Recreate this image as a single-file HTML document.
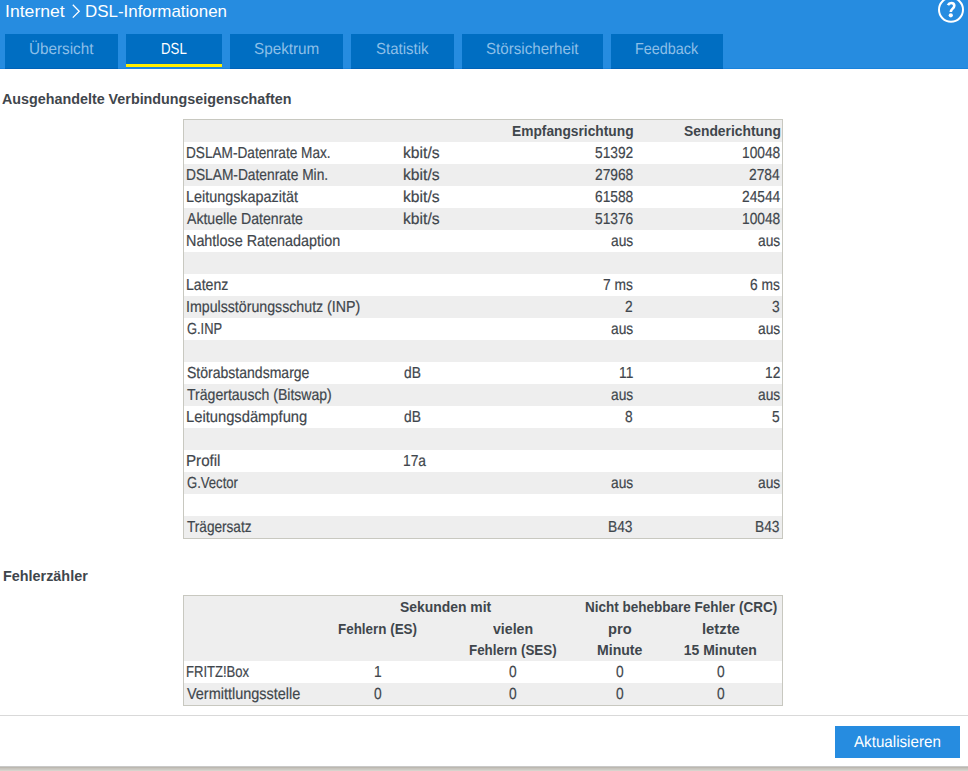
<!DOCTYPE html>
<html><head><meta charset="utf-8"><style>
html,body{margin:0;padding:0;background:#fff;width:968px;height:771px;overflow:hidden;position:relative}
body{font-family:"Liberation Sans",sans-serif;color:#3f464c}
.t{position:absolute;white-space:nowrap;line-height:22px;transform-origin:0 0}
.b{position:absolute}
</style></head><body>
<div class="b" style="left:0px;top:0px;width:968px;height:69px;background:#268ce0;"></div>
<div class="b" style="left:5px;top:34px;width:113px;height:35px;background:#006ec2;"></div>
<div class="b" style="left:126px;top:34px;width:96px;height:35px;background:#006ec2;"></div>
<div class="b" style="left:230px;top:34px;width:113px;height:35px;background:#006ec2;"></div>
<div class="b" style="left:351px;top:34px;width:103px;height:35px;background:#006ec2;"></div>
<div class="b" style="left:462px;top:34px;width:141px;height:35px;background:#006ec2;"></div>
<div class="b" style="left:611px;top:34px;width:112px;height:35px;background:#006ec2;"></div>
<div class="b" style="left:126px;top:64px;width:96px;height:3px;background:#ffee00;"></div>
<div class="b" style="left:183px;top:119px;width:600px;height:420px;background:#c8c8c0;"></div>
<div class="b" style="left:184px;top:120px;width:598px;height:418px;background:#ffffff;"></div>
<div class="b" style="left:184px;top:120px;width:598px;height:22px;background:#eeeeee;"></div>
<div class="b" style="left:184px;top:164px;width:598px;height:22px;background:#eeeeee;"></div>
<div class="b" style="left:184px;top:208px;width:598px;height:22px;background:#eeeeee;"></div>
<div class="b" style="left:184px;top:252px;width:598px;height:22px;background:#eeeeee;"></div>
<div class="b" style="left:184px;top:296px;width:598px;height:22px;background:#eeeeee;"></div>
<div class="b" style="left:184px;top:340px;width:598px;height:22px;background:#eeeeee;"></div>
<div class="b" style="left:184px;top:384px;width:598px;height:22px;background:#eeeeee;"></div>
<div class="b" style="left:184px;top:428px;width:598px;height:22px;background:#eeeeee;"></div>
<div class="b" style="left:184px;top:472px;width:598px;height:22px;background:#eeeeee;"></div>
<div class="b" style="left:184px;top:516px;width:598px;height:22px;background:#eeeeee;"></div>
<div class="b" style="left:183px;top:595px;width:600px;height:111px;background:#c8c8c0;"></div>
<div class="b" style="left:184px;top:596px;width:598px;height:109px;background:#ffffff;"></div>
<div class="b" style="left:184px;top:596px;width:598px;height:65px;background:#eeeeee;"></div>
<div class="b" style="left:184px;top:683px;width:598px;height:22px;background:#eeeeee;"></div>
<div class="b" style="left:0px;top:715px;width:968px;height:1px;background:#d9d9d9;"></div>
<div class="b" style="left:835px;top:726px;width:125px;height:32px;background:#268ce0;"></div>
<div class="b" style="left:0px;top:766px;width:968px;height:1px;background:#c9c9c8;"></div>
<div class="b" style="left:0px;top:767px;width:968px;height:1px;background:#bcb8b0;"></div>
<div class="b" style="left:0px;top:768px;width:968px;height:1px;background:#c7c4bd;"></div>
<div class="b" style="left:0px;top:769px;width:968px;height:1px;background:#cdcbc5;"></div>
<div class="b" style="left:0px;top:770px;width:968px;height:1px;background:#d7d4cd;"></div>
<div class="b" style="left:0px;top:68px;width:968px;height:1px;background:#1982dc;"></div>
<div class="b" style="left:5px;top:68px;width:113px;height:1px;background:#0062b8;"></div>
<div class="b" style="left:126px;top:67px;width:96px;height:2px;background:#1a84e2;"></div>
<div class="b" style="left:230px;top:68px;width:113px;height:1px;background:#0062b8;"></div>
<div class="b" style="left:351px;top:68px;width:103px;height:1px;background:#0062b8;"></div>
<div class="b" style="left:462px;top:68px;width:141px;height:1px;background:#0062b8;"></div>
<div class="b" style="left:611px;top:68px;width:112px;height:1px;background:#0062b8;"></div>
<svg class="b" style="left:0;top:0" width="968" height="69">
<polyline points="72.8,4.8 79.2,11.2 72.8,17.6" fill="none" stroke="#fff" stroke-width="1.3"/>
<circle cx="951" cy="9.7" r="12" fill="none" stroke="#fff" stroke-width="2"/>
<path d="M947.9,5.2 C948.7,3.7 949.9,3.0 951.3,3.0 C953.2,3.0 954.3,4.2 954.3,5.8 C954.3,7.4 953.1,8.3 952.2,9.1 C951.3,9.9 950.8,10.6 950.8,12.0" fill="none" stroke="#fff" stroke-width="2.6"/>
<circle cx="950.8" cy="15.35" r="2.1" fill="#fff"/>
</svg>
<div class="t" style="left:4.96px;top:1px;font-size:17px;transform:scaleX(1.0364);color:#fff;">Internet</div>
<div class="t" style="left:84.51px;top:1px;font-size:17px;transform:scaleX(0.9948);color:#fff;">DSL-Informationen</div>
<div class="t" style="left:28.55px;top:39px;font-size:16px;text-rendering:geometricPrecision;transform:scaleX(0.9533);color:#8cbfe8;">Übersicht</div>
<div class="t" style="left:160.67px;top:39px;font-size:16px;text-rendering:geometricPrecision;transform:scaleX(0.8271);color:#fff;">DSL</div>
<div class="t" style="left:254.00px;top:39px;font-size:16px;text-rendering:geometricPrecision;transform:scaleX(0.9539);color:#8cbfe8;">Spektrum</div>
<div class="t" style="left:375.80px;top:39px;font-size:16px;text-rendering:geometricPrecision;transform:scaleX(0.9366);color:#8cbfe8;">Statistik</div>
<div class="t" style="left:486.00px;top:39px;font-size:16px;text-rendering:geometricPrecision;transform:scaleX(0.9454);color:#8cbfe8;">Störsicherheit</div>
<div class="t" style="left:634.50px;top:39px;font-size:16px;text-rendering:geometricPrecision;transform:scaleX(0.8994);color:#8cbfe8;">Feedback</div>
<div class="t" style="left:2.20px;top:88px;font-size:14px;transform:scaleX(1.0226);font-weight:bold;">Ausgehandelte Verbindungseigenschaften</div>
<div class="t" style="left:512.00px;top:120px;font-size:14px;transform:scaleX(0.9828);font-weight:bold;">Empfangsrichtung</div>
<div class="t" style="left:683.60px;top:120px;font-size:14px;transform:scaleX(0.9892);font-weight:bold;">Senderichtung</div>
<div class="t" style="left:186.15px;top:143px;font-size:16px;text-rendering:geometricPrecision;-webkit-text-stroke:0.2px;transform:scaleX(0.8513);">DSLAM-Datenrate Max.</div>
<div class="t" style="left:403.02px;top:143px;font-size:16px;text-rendering:geometricPrecision;-webkit-text-stroke:0.2px;transform:scaleX(0.9795);">kbit/s</div>
<div class="t" style="left:594.65px;top:143px;font-size:16px;text-rendering:geometricPrecision;-webkit-text-stroke:0.2px;transform:scaleX(0.8600);">51392</div>
<div class="t" style="left:741.65px;top:143px;font-size:16px;text-rendering:geometricPrecision;-webkit-text-stroke:0.2px;transform:scaleX(0.8600);">10048</div>
<div class="t" style="left:186.14px;top:165px;font-size:16px;text-rendering:geometricPrecision;-webkit-text-stroke:0.2px;transform:scaleX(0.8592);">DSLAM-Datenrate Min.</div>
<div class="t" style="left:403.02px;top:165px;font-size:16px;text-rendering:geometricPrecision;-webkit-text-stroke:0.2px;transform:scaleX(0.9795);">kbit/s</div>
<div class="t" style="left:594.65px;top:165px;font-size:16px;text-rendering:geometricPrecision;-webkit-text-stroke:0.2px;transform:scaleX(0.8600);">27968</div>
<div class="t" style="left:749.30px;top:165px;font-size:16px;text-rendering:geometricPrecision;-webkit-text-stroke:0.2px;transform:scaleX(0.8600);">2784</div>
<div class="t" style="left:186.10px;top:187px;font-size:16px;text-rendering:geometricPrecision;-webkit-text-stroke:0.2px;transform:scaleX(0.8986);">Leitungskapazität</div>
<div class="t" style="left:403.02px;top:187px;font-size:16px;text-rendering:geometricPrecision;-webkit-text-stroke:0.2px;transform:scaleX(0.9795);">kbit/s</div>
<div class="t" style="left:594.65px;top:187px;font-size:16px;text-rendering:geometricPrecision;-webkit-text-stroke:0.2px;transform:scaleX(0.8600);">61588</div>
<div class="t" style="left:741.65px;top:187px;font-size:16px;text-rendering:geometricPrecision;-webkit-text-stroke:0.2px;transform:scaleX(0.8600);">24544</div>
<div class="t" style="left:187.00px;top:209px;font-size:16px;text-rendering:geometricPrecision;-webkit-text-stroke:0.2px;transform:scaleX(0.8806);">Aktuelle Datenrate</div>
<div class="t" style="left:403.02px;top:209px;font-size:16px;text-rendering:geometricPrecision;-webkit-text-stroke:0.2px;transform:scaleX(0.9795);">kbit/s</div>
<div class="t" style="left:594.65px;top:209px;font-size:16px;text-rendering:geometricPrecision;-webkit-text-stroke:0.2px;transform:scaleX(0.8600);">51376</div>
<div class="t" style="left:741.65px;top:209px;font-size:16px;text-rendering:geometricPrecision;-webkit-text-stroke:0.2px;transform:scaleX(0.8600);">10048</div>
<div class="t" style="left:186.10px;top:231px;font-size:16px;text-rendering:geometricPrecision;-webkit-text-stroke:0.2px;transform:scaleX(0.8982);">Nahtlose Ratenadaption</div>
<div class="t" style="left:610.81px;top:231px;font-size:16px;text-rendering:geometricPrecision;-webkit-text-stroke:0.2px;transform:scaleX(0.8600);">aus</div>
<div class="t" style="left:757.81px;top:231px;font-size:16px;text-rendering:geometricPrecision;-webkit-text-stroke:0.2px;transform:scaleX(0.8600);">aus</div>
<div class="t" style="left:186.12px;top:275px;font-size:16px;text-rendering:geometricPrecision;-webkit-text-stroke:0.2px;transform:scaleX(0.8822);">Latenz</div>
<div class="t" style="left:603.18px;top:275px;font-size:16px;text-rendering:geometricPrecision;-webkit-text-stroke:0.2px;transform:scaleX(0.8600);">7 ms</div>
<div class="t" style="left:750.18px;top:275px;font-size:16px;text-rendering:geometricPrecision;-webkit-text-stroke:0.2px;transform:scaleX(0.8600);">6 ms</div>
<div class="t" style="left:186.11px;top:297px;font-size:16px;text-rendering:geometricPrecision;-webkit-text-stroke:0.2px;transform:scaleX(0.8864);">Impulsstörungsschutz (INP)</div>
<div class="t" style="left:625.26px;top:297px;font-size:16px;text-rendering:geometricPrecision;-webkit-text-stroke:0.2px;transform:scaleX(0.8600);">2</div>
<div class="t" style="left:772.26px;top:297px;font-size:16px;text-rendering:geometricPrecision;-webkit-text-stroke:0.2px;transform:scaleX(0.8600);">3</div>
<div class="t" style="left:187.00px;top:319px;font-size:16px;text-rendering:geometricPrecision;-webkit-text-stroke:0.2px;transform:scaleX(0.8044);">G.INP</div>
<div class="t" style="left:610.81px;top:319px;font-size:16px;text-rendering:geometricPrecision;-webkit-text-stroke:0.2px;transform:scaleX(0.8600);">aus</div>
<div class="t" style="left:757.81px;top:319px;font-size:16px;text-rendering:geometricPrecision;-webkit-text-stroke:0.2px;transform:scaleX(0.8600);">aus</div>
<div class="t" style="left:187.00px;top:363px;font-size:16px;text-rendering:geometricPrecision;-webkit-text-stroke:0.2px;transform:scaleX(0.8767);">Störabstandsmarge</div>
<div class="t" style="left:404.00px;top:363px;font-size:16px;text-rendering:geometricPrecision;-webkit-text-stroke:0.2px;transform:scaleX(0.8600);">dB</div>
<div class="t" style="left:618.63px;top:363px;font-size:16px;text-rendering:geometricPrecision;-webkit-text-stroke:0.2px;transform:scaleX(0.8600);">11</div>
<div class="t" style="left:764.61px;top:363px;font-size:16px;text-rendering:geometricPrecision;-webkit-text-stroke:0.2px;transform:scaleX(0.8600);">12</div>
<div class="t" style="left:187.00px;top:385px;font-size:16px;text-rendering:geometricPrecision;-webkit-text-stroke:0.2px;transform:scaleX(0.8786);">Trägertausch (Bitswap)</div>
<div class="t" style="left:610.81px;top:385px;font-size:16px;text-rendering:geometricPrecision;-webkit-text-stroke:0.2px;transform:scaleX(0.8600);">aus</div>
<div class="t" style="left:757.81px;top:385px;font-size:16px;text-rendering:geometricPrecision;-webkit-text-stroke:0.2px;transform:scaleX(0.8600);">aus</div>
<div class="t" style="left:186.08px;top:407px;font-size:16px;text-rendering:geometricPrecision;-webkit-text-stroke:0.2px;transform:scaleX(0.9209);">Leitungsdämpfung</div>
<div class="t" style="left:404.00px;top:407px;font-size:16px;text-rendering:geometricPrecision;-webkit-text-stroke:0.2px;transform:scaleX(0.8600);">dB</div>
<div class="t" style="left:625.26px;top:407px;font-size:16px;text-rendering:geometricPrecision;-webkit-text-stroke:0.2px;transform:scaleX(0.8600);">8</div>
<div class="t" style="left:772.26px;top:407px;font-size:16px;text-rendering:geometricPrecision;-webkit-text-stroke:0.2px;transform:scaleX(0.8600);">5</div>
<div class="t" style="left:186.05px;top:451px;font-size:16px;text-rendering:geometricPrecision;-webkit-text-stroke:0.2px;transform:scaleX(0.9456);">Profil</div>
<div class="t" style="left:403.14px;top:451px;font-size:16px;text-rendering:geometricPrecision;-webkit-text-stroke:0.2px;transform:scaleX(0.8600);">17a</div>
<div class="t" style="left:187.00px;top:473px;font-size:16px;text-rendering:geometricPrecision;-webkit-text-stroke:0.2px;transform:scaleX(0.8185);">G.Vector</div>
<div class="t" style="left:610.81px;top:473px;font-size:16px;text-rendering:geometricPrecision;-webkit-text-stroke:0.2px;transform:scaleX(0.8600);">aus</div>
<div class="t" style="left:757.81px;top:473px;font-size:16px;text-rendering:geometricPrecision;-webkit-text-stroke:0.2px;transform:scaleX(0.8600);">aus</div>
<div class="t" style="left:187.00px;top:517px;font-size:16px;text-rendering:geometricPrecision;-webkit-text-stroke:0.2px;transform:scaleX(0.8501);">Trägersatz</div>
<div class="t" style="left:608.43px;top:517px;font-size:16px;text-rendering:geometricPrecision;-webkit-text-stroke:0.2px;transform:scaleX(0.8600);">B43</div>
<div class="t" style="left:755.43px;top:517px;font-size:16px;text-rendering:geometricPrecision;-webkit-text-stroke:0.2px;transform:scaleX(0.8600);">B43</div>
<div class="t" style="left:3.20px;top:564.5px;font-size:14px;transform:scaleX(1.0274);font-weight:bold;">Fehlerzähler</div>
<div class="t" style="left:399.75px;top:596px;font-size:14px;transform:scaleX(0.9932);font-weight:bold;">Sekunden mit</div>
<div class="t" style="left:584.75px;top:596px;font-size:14px;transform:scaleX(0.9649);font-weight:bold;">Nicht behebbare Fehler (CRC)</div>
<div class="t" style="left:338.30px;top:618px;font-size:14px;transform:scaleX(0.9585);font-weight:bold;">Fehlern (ES)</div>
<div class="t" style="left:492.75px;top:618px;font-size:14px;transform:scaleX(1.0093);font-weight:bold;">vielen</div>
<div class="t" style="left:608.00px;top:618px;font-size:14px;transform:scaleX(1.0455);font-weight:bold;">pro</div>
<div class="t" style="left:701.50px;top:618px;font-size:14px;transform:scaleX(1.0556);font-weight:bold;">letzte</div>
<div class="t" style="left:468.50px;top:639px;font-size:14px;transform:scaleX(0.9547);font-weight:bold;">Fehlern (SES)</div>
<div class="t" style="left:596.70px;top:639px;font-size:14px;transform:scaleX(1.0062);font-weight:bold;">Minute</div>
<div class="t" style="left:683.70px;top:639px;font-size:14px;font-weight:bold;">15 Minuten</div>
<div class="t" style="left:186.19px;top:662px;font-size:16px;text-rendering:geometricPrecision;-webkit-text-stroke:0.2px;transform:scaleX(0.8148);">FRITZ!Box</div>
<div class="t" style="left:187.00px;top:684px;font-size:16px;text-rendering:geometricPrecision;-webkit-text-stroke:0.2px;transform:scaleX(0.9028);">Vermittlungsstelle</div>
<div class="t" style="left:373.70px;top:662px;font-size:16px;text-rendering:geometricPrecision;-webkit-text-stroke:0.2px;transform:scaleX(0.8600);">1</div>
<div class="t" style="left:508.63px;top:662px;font-size:16px;text-rendering:geometricPrecision;-webkit-text-stroke:0.2px;transform:scaleX(0.8600);">0</div>
<div class="t" style="left:616.13px;top:662px;font-size:16px;text-rendering:geometricPrecision;-webkit-text-stroke:0.2px;transform:scaleX(0.8600);">0</div>
<div class="t" style="left:716.63px;top:662px;font-size:16px;text-rendering:geometricPrecision;-webkit-text-stroke:0.2px;transform:scaleX(0.8600);">0</div>
<div class="t" style="left:374.13px;top:684px;font-size:16px;text-rendering:geometricPrecision;-webkit-text-stroke:0.2px;transform:scaleX(0.8600);">0</div>
<div class="t" style="left:508.63px;top:684px;font-size:16px;text-rendering:geometricPrecision;-webkit-text-stroke:0.2px;transform:scaleX(0.8600);">0</div>
<div class="t" style="left:616.13px;top:684px;font-size:16px;text-rendering:geometricPrecision;-webkit-text-stroke:0.2px;transform:scaleX(0.8600);">0</div>
<div class="t" style="left:716.63px;top:684px;font-size:16px;text-rendering:geometricPrecision;-webkit-text-stroke:0.2px;transform:scaleX(0.8600);">0</div>
<div class="t" style="left:854.00px;top:732px;font-size:16px;text-rendering:geometricPrecision;transform:scaleX(0.9481);color:#fff;">Aktualisieren</div>
</body></html>
